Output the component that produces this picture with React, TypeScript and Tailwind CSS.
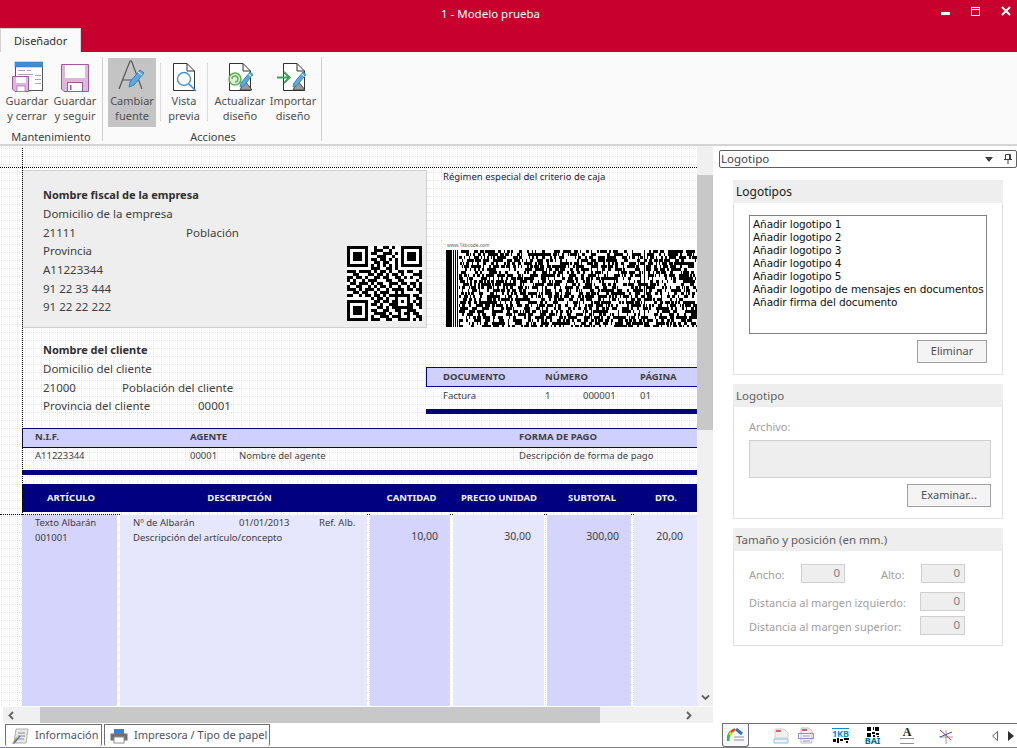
import type { ReactNode } from 'react'

const qrRows = [
  '1111111001001101001111111',
  '1000001001110010001000001',
  '1011101011001110101011101',
  '1011101000111001001011101',
  '1011101011011010101011101',
  '1000001001101100101000001',
  '1111111010101010101111111',
  '0000000011100110100000000',
  '1110111101011010011011001',
  '0011000110110101101000111',
  '1101101001101100110101001',
  '1010010111000110011000010',
  '0110111010110011101101101',
  '1001100101011010010010101',
  '1110101110100101111011011',
  '0011011001011100101000001',
  '1100101101101011111110110',
  '0000000010110100100010011',
  '1111111001101101101010101',
  '1000001011010011100011011',
  '1011101000110101111111001',
  '1011101011001100110011100',
  '1011101001111010010110110',
  '1000001010011101110010011',
  '1111111011100110011110101',
]

const QrCode = () => (
  <svg width={75} height={75} viewBox="0 0 25 25" shapeRendering="crispEdges">
    <rect width={25} height={25} fill="#fff" />
    {qrRows.map((row, y) =>
      row.split('').map((cell, x) => (cell === '1' ? <rect key={`${x}-${y}`} x={x} y={y} width={1} height={1} fill="#000" /> : null))
    )}
  </svg>
)

// pseudo random bars for the pdf417 block
const makeBars = () => {
  let seed = 7
  const next = () => {
    seed = (seed * 1103515245 + 12345) & 0x7fffffff
    return seed / 0x7fffffff
  }
  const bars: { x: number; y: number; w: number }[] = []
  for (let y = 0; y < 77; y += 3) {
    let x = 13
    while (x < 251) {
      const w = 1 + Math.floor(next() * 2.5)
      if (next() > 0.47) bars.push({ x, y, w })
      x += w
    }
  }
  return bars
}
const bars = makeBars()

const Barcode = () => (
  <svg width={251} height={77} shapeRendering="crispEdges">
    <rect width={251} height={77} fill="#fff" />
    <rect x={0} width={6} height={77} fill="#000" />
    <rect x={7} width={1} height={77} fill="#000" />
    <rect x={9} width={1} height={77} fill="#000" />
    <rect x={11} width={1} height={77} fill="#000" />
    {[47, 96, 145, 198].map((x) => (
      <rect key={x} x={x} width={1} height={77} fill="#000" />
    ))}
    {bars.map((b, i) => (
      <rect key={i} x={b.x} y={b.y} width={b.w} height={3} fill="#000" />
    ))}
  </svg>
)

const GridDots = () => (
  <svg className="absolute inset-0" width={697} height={560} shapeRendering="crispEdges">
    <defs>
      <pattern id="dots" x={1} y={2} width={8} height={8} patternUnits="userSpaceOnUse">
        <rect x={0} y={0} width={1} height={1} fill="#d8d8d8" />
        <rect x={2} y={0} width={1} height={1} fill="#e2e2e2" />
        <rect x={4} y={0} width={1} height={1} fill="#e2e2e2" />
        <rect x={6} y={0} width={1} height={1} fill="#e2e2e2" />
        <rect x={0} y={2} width={1} height={1} fill="#e2e2e2" />
        <rect x={0} y={4} width={1} height={1} fill="#e2e2e2" />
        <rect x={0} y={6} width={1} height={1} fill="#e2e2e2" />
      </pattern>
    </defs>
    <rect width={697} height={560} fill="url(#dots)" />
  </svg>
)

const Pencil = ({ x = 0, y = 0 }: { x?: number; y?: number }) => (
  <g transform={`translate(${x} ${y})`}>
    <path d="M2 14 L11 3 L14 5.5 L5 16.5 L1 18 Z" fill="#5fa8dc" stroke="#2f86c6" strokeWidth="1" />
    <path d="M9.5 5 L12.5 7.5" stroke="#fff" strokeWidth="1" />
  </g>
)

const DocOutline = () => (
  <path d="M5.5 2.5 H19 L26.5 10 V29.5 H5.5 Z M19 2.5 V10 H26.5" fill="#fff" stroke="#333" strokeWidth="1" />
)

const SaveCloseIcon = () => (
  <svg width={32} height={32} viewBox="0 0 32 32">
    <rect x="4.5" y="1.5" width="27" height="28" fill="#fff" stroke="#555" />
    <rect x="4" y="1" width="28" height="5" fill="#3f8fd0" stroke="#2a76b5" strokeWidth="0.5" />
    <path d="M7 9.5H14M16 9.5H20M24 14.5H30M24 18.5H30M24 22.5H30M7 13.5H22" stroke="#aaa" />
    <path d="M1.5 15.5H17.5V30.5H4L1.5 28Z" fill="#dcb8dc" stroke="#a3559f" />
    <rect x="5" y="16" width="10" height="6" fill="#fff" />
    <rect x="6" y="25" width="8" height="5.5" fill="#fff" stroke="#a3559f" strokeWidth="0.6" />
  </svg>
)

const SaveIcon = () => (
  <svg width={30} height={30} viewBox="0 0 30 30">
    <path d="M1.5 1.5H28.5V28.5H4L1.5 26Z" fill="#dcb8dc" stroke="#a3559f" />
    <rect x="5" y="2" width="20" height="13" fill="#fff" />
    <rect x="7.5" y="19.5" width="15" height="9" fill="#fff" stroke="#a3559f" />
    <rect x="10" y="22" width="1.5" height="5" fill="#a3559f" />
  </svg>
)

const FontIcon = () => (
  <svg width={34} height={34} viewBox="0 0 34 34">
    <path d="M4 30 L15 2 L16.5 2 L27 30 M8 21 H23" fill="none" stroke="#555" strokeWidth="1.2" />
    <g transform="translate(13 8)">
      <path d="M2 15 L12 3 L16 6 L6 18 L1 20 Z" fill="#5fa8dc" stroke="#2f86c6" />
      <path d="M10 5 L14 8" stroke="#fff" />
    </g>
  </svg>
)

const PreviewIcon = () => (
  <svg width={32} height={32} viewBox="0 0 32 32">
    <DocOutline />
    <circle cx="16" cy="18" r="6.5" fill="#fff" stroke="#3a97d4" strokeWidth="1.4" />
    <path d="M21 23 L28 30" stroke="#3a97d4" strokeWidth="1.6" />
  </svg>
)

const RefreshDocIcon = () => (
  <svg width={34} height={32} viewBox="0 0 34 32">
    <g transform="translate(1 0)">
      <DocOutline />
    </g>
    <circle cx="12" cy="18" r="6" fill="#dff0d8" stroke="#5db04f" strokeWidth="1.6" />
    <path d="M9 18 A3 3 0 1 1 12 21" fill="none" stroke="#5db04f" strokeWidth="1.4" />
    <path d="M17 29 L22 20 L29 29 Z" fill="#999" stroke="#333" strokeWidth="0.8" />
    <Pencil x={16} y={8} />
  </svg>
)

const ImportDocIcon = () => (
  <svg width={34} height={32} viewBox="0 0 34 32">
    <g transform="translate(2 0)">
      <DocOutline />
    </g>
    <path d="M1 16.5 H12 M8 11 L13.5 16.5 L8 22" fill="none" stroke="#3fa25a" strokeWidth="2.2" />
    <path d="M17 29 L22 20 L29 29 Z" fill="#999" stroke="#333" strokeWidth="0.8" />
    <Pencil x={16} y={8} />
  </svg>
)

const RibbonButton = ({ icon, top, bottom, active }: { icon: ReactNode; top: string; bottom: string; active?: boolean }) => (
  <div className={`flex h-[69px] flex-col items-center ${active ? 'bg-[#c4c4c4]' : ''}`}>
    <div className="flex h-[35px] items-end justify-center">{icon}</div>
    <span className="leading-[15px] whitespace-nowrap">{top}</span>
    <span className="leading-[15px] whitespace-nowrap">{bottom}</span>
  </div>
)

const Ribbon = () => (
  <div className="relative flex h-[94px] shrink-0 border-b-2 border-[#d4d4d4] bg-[#fafafa] text-[11px] text-[#505050]">
    <div className="flex w-[103px] flex-col border-r border-[#d0d0d0] mt-[5px] mb-[3px]">
      <div className="flex h-[69px] gap-[4px] pl-[5px] pt-[1px]">
        <div className="w-[44px]">
          <RibbonButton icon={<SaveCloseIcon />} top="Guardar" bottom="y cerrar" />
        </div>
        <div className="w-[44px]">
          <RibbonButton icon={<SaveIcon />} top="Guardar" bottom="y seguir" />
        </div>
      </div>
      <div className="mt-[3px] text-center leading-[15px] text-[#404040]">Mantenimiento</div>
    </div>
    <div className="flex w-[219px] flex-col border-r border-[#d0d0d0] mt-[5px] mb-[3px]">
      <div className="flex h-[69px] pt-[1px] pl-[5px]">
        <div className="w-[48px]">
          <RibbonButton icon={<FontIcon />} top="Cambiar" bottom="fuente" active />
        </div>
        <div className="my-[5px] ml-[4px] w-px bg-[#dcdcdc]" />
        <div className="w-[46px]">
          <RibbonButton icon={<PreviewIcon />} top="Vista" bottom="previa" />
        </div>
        <div className="my-[5px] w-px bg-[#dcdcdc]" />
        <div className="ml-[5px] w-[54px]">
          <RibbonButton icon={<RefreshDocIcon />} top="Actualizar" bottom="diseño" />
        </div>
        <div className="ml-[1px] w-[50px]">
          <RibbonButton icon={<ImportDocIcon />} top="Importar" bottom="diseño" />
        </div>
      </div>
      <div className="mt-[3px] pl-[2px] text-center leading-[15px] text-[#404040]">Acciones</div>
    </div>
  </div>
)

const ColumnHead = ({ width, label }: { width: string; label: string }) => (
  <div className={`${width} text-center whitespace-nowrap`}>{label}</div>
)

const ReportCanvas = () => (
  <div className="relative h-[560px] w-[697px] overflow-hidden bg-white text-[9.5px] leading-[14px] text-[#404040]">
    <GridDots />

    {/* company block */}
    <div className="absolute left-[22px] top-[24px] h-[158px] w-[405px] border border-[#d0d0d0] bg-[#eeeeee] text-[11.5px] leading-[18.7px]">
      <div className="pl-[20px] pt-[15px]">
        <div className="text-[11px] font-bold text-[#303030]">Nombre fiscal de la empresa</div>
        <div>Domicilio de la empresa</div>
        <div className="flex pt-px">
          <span className="w-[143px]">21111</span>
          <span>Población</span>
        </div>
        <div className="-mt-px">Provincia</div>
        <div>A11223344</div>
        <div>91 22 33 444</div>
        <div>91 22 22 222</div>
      </div>
      <div className="absolute left-[324px] top-[75px]">
        <QrCode />
      </div>
    </div>

    <div className="absolute left-[443px] top-[24px] text-[#202040]">Régimen especial del criterio de caja</div>

    <div className="absolute left-[446px] top-[94px] w-[251px] bg-white">
      <div className="h-[10px] pl-[1px] text-[4.8px] leading-[10px] text-[#606060]">www.1kbcode.com</div>
      <Barcode />
    </div>

    {/* client block */}
    <div className="absolute left-[43px] top-[195px] text-[11.5px] leading-[18.5px]">
      <div className="text-[11px] font-bold text-[#303030]">Nombre del cliente</div>
      <div>Domicilio del cliente</div>
      <div className="flex pt-px">
        <span className="w-[79px]">21000</span>
        <span>Población del cliente</span>
      </div>
      <div className="-mt-px flex">
        <span className="w-[155px]">Provincia del cliente</span>
        <span>00001</span>
      </div>
    </div>

    {/* document data */}
    <div className="absolute left-[426px] top-[221px] w-[271px]">
      <div className="flex h-[20px] items-center border-y border-l border-[#000080] bg-[#d0d0ff] pb-px pl-[16px] font-bold">
        <span className="w-[102px]">DOCUMENTO</span>
        <span className="w-[95px]">NÚMERO</span>
        <span>PÁGINA</span>
      </div>
      <div className="flex h-[19px] items-center pb-[2px] pl-[17px]">
        <span className="w-[102px]">Factura</span>
        <span className="w-[38px]">1</span>
        <span className="w-[57px]">000001</span>
        <span>01</span>
      </div>
      <div className="mt-[3px] h-[5px] bg-[#000080]" />
    </div>

    {/* tax and agent */}
    <div className="absolute left-[22px] top-[282px] w-[675px]">
      <div className="flex h-[20px] items-center border-y border-l border-[#000080] bg-[#d0d0ff] pb-[2px] pl-[12px] font-bold">
        <span className="w-[155px]">N.I.F.</span>
        <span className="w-[329px]">AGENTE</span>
        <span>FORMA DE PAGO</span>
      </div>
      <div className="flex h-[19px] items-center pb-[4px] pl-[13px]">
        <span className="w-[155px]">A11223344</span>
        <span className="w-[49px]">00001</span>
        <span className="w-[280px]">Nombre del agente</span>
        <span>Descripción de forma de pago</span>
      </div>
      <div className="mt-[3px] h-[5px] bg-[#000080]" />
    </div>

    {/* article table */}
    <div className="absolute left-[22px] top-[338px] w-[675px]">
      <div className="flex h-[28px] items-center bg-[#000080] font-bold text-[#f0f0ff]">
        <ColumnHead width="w-[98px]" label="ARTÍCULO" />
        <ColumnHead width="w-[239px]" label="DESCRIPCIÓN" />
        <ColumnHead width="w-[93px] pl-[12px]" label="CANTIDAD" />
        <ColumnHead width="w-[94px]" label="PRECIO UNIDAD" />
        <ColumnHead width="w-[92px]" label="SUBTOTAL" />
        <ColumnHead width="w-[56px]" label="DTO." />
      </div>
      <div className="mt-[3px] flex h-[191px] gap-[3px] leading-[15px]">
        <div className="w-[95px] bg-[#d4d4fc] pl-[13px]">
          <div>Texto Albarán</div>
          <div>001001</div>
        </div>
        <div className="w-[247px] bg-[#e6e6fc] pl-[13px]">
          <div className="flex">
            <span className="w-[106px]">Nº de Albarán</span>
            <span className="w-[80px]">01/01/2013</span>
            <span>Ref. Alb.</span>
          </div>
          <div>Descripción del artículo/concepto</div>
        </div>
        <div className="w-[80px] bg-[#d4d4fc] pr-[12px] pt-[14px] text-right text-[10.5px]">10,00</div>
        <div className="w-[91px] bg-[#e6e6fc] pr-[13px] pt-[14px] text-right text-[10.5px]">30,00</div>
        <div className="w-[84px] bg-[#d4d4fc] pr-[12px] pt-[14px] text-right text-[10.5px]">300,00</div>
        <div className="w-[63px] bg-[#e6e6fc] pr-[14px] pt-[14px] text-right text-[10.5px]">20,00</div>
      </div>
    </div>

    {/* margin guides */}
    <div className="absolute left-0 top-[21px] w-[697px] border-t border-dotted border-black" />
    <div className="absolute left-[22px] top-[2px] h-[367px] border-l border-dotted border-black" />
    <div className="absolute left-0 top-[368px] w-[120px] border-t border-dotted border-black" />
    <div className="absolute left-[367px] top-[368px] w-[3px] border-t border-dotted border-black" />
    <div className="absolute left-[450px] top-[368px] w-[3px] border-t border-dotted border-black" />
    <div className="absolute left-[544px] top-[368px] w-[3px] border-t border-dotted border-black" />
    <div className="absolute left-[631px] top-[368px] w-[3px] border-t border-dotted border-black" />
  </div>
)

const Chevron = ({ d }: { d: string }) => (
  <svg width={9} height={9} viewBox="0 0 9 9">
    <path d={d} fill="none" stroke="#606060" strokeWidth="1.8" />
  </svg>
)

const CanvasPane = () => (
  <div className="flex w-[714px] flex-col">
    <div className="flex h-[560px]">
      <ReportCanvas />
      <div className="flex w-[16px] flex-col bg-[#f0f0f0]">
        <div className="mt-[29px] h-[255px] bg-[#c8c8c8]" />
        <div className="flex flex-1 items-end justify-center pb-[4px]">
          <Chevron d="M1 2.5 L4.5 6 L8 2.5" />
        </div>
      </div>
    </div>
    <div className="ml-[3px] mt-px flex h-[16px] w-[710px] items-center bg-[#f0f0f0]">
      <div className="flex w-[37px] justify-center pr-[20px]">
        <Chevron d="M6 1 L2.5 4.5 L6 8" />
      </div>
      <div className="h-full w-[560px] bg-[#c8c8c8]" />
      <div className="ml-[84px]">
        <Chevron d="M3 1 L6.5 4.5 L3 8" />
      </div>
    </div>
  </div>
)

const PanelGroup = ({ title, muted, height, children }: { title: string; muted?: boolean; height: string; children: ReactNode }) => (
  <section className={`flex ${height} flex-col border border-t-0 border-[#e0e0e0]`}>
    <div className={`-mx-px h-[23px] shrink-0 bg-[#eeeeee] pl-[3px] leading-[23px] ${muted ? 'text-[11.5px] text-[#606060]' : 'text-[12px] text-[#202020]'}`}>
      {title}
    </div>
    {children}
  </section>
)

const FlatButton = ({ width, label }: { width: string; label: string }) => (
  <div className={`${width} flex h-[23px] items-center justify-center border border-[#a0a0a0] bg-[#f4f4f4] text-[11px] text-[#505050]`}>{label}</div>
)

const NumberField = ({ width }: { width: string }) => (
  <div className={`${width} h-[19px] border border-[#d0d0d0] bg-[#eeeeee] pr-[4px] text-right text-[11.5px] leading-[15px] text-[#808080]`}>0</div>
)

const listItems = [
  'Añadir logotipo 1',
  'Añadir logotipo 2',
  'Añadir logotipo 3',
  'Añadir logotipo 4',
  'Añadir logotipo 5',
  'Añadir logotipo de mensajes en documentos',
  'Añadir firma del documento',
]

const SidePanel = () => (
  <div className="flex w-[303px] flex-col bg-white pl-[5px] pt-[4px]">
    <div className="flex h-[18px] w-[298px] items-center justify-between rounded-[2px] border border-[#606060] pl-[1px] pr-[4px] text-[11.5px] text-[#404050]">
      <span>Logotipo</span>
      <div className="flex items-center gap-[11px]">
        <svg width={8} height={5} viewBox="0 0 8 5">
          <path d="M0 0H8L4 5Z" fill="#404040" />
        </svg>
        <svg width={8} height={10} viewBox="0 0 8 10">
          <path d="M1.5 0.5H6.5V5.5H1.5ZM0 5.5H8M4 5.5V10M5.5 0.5V5.5" fill="none" stroke="#404040" />
        </svg>
      </div>
    </div>

    <div className="ml-[14px] mt-[12px] flex w-[270px] flex-col gap-[9px]">
      <PanelGroup title="Logotipos" height="h-[195px]">
        <div className="ml-[15px] mt-[12px] h-[119px] w-[238px] border border-[#808080] pl-[3px] pt-[2px] font-['DejaVu_Sans',sans-serif] text-[10.5px] leading-[13px] text-[#101010]">
          {listItems.map((item) => (
            <div key={item} className="whitespace-nowrap tracking-[-0.1px]">
              {item}
            </div>
          ))}
        </div>
        <div className="ml-[183px] mt-[6px]">
          <FlatButton width="w-[70px]" label="Eliminar" />
        </div>
      </PanelGroup>

      <PanelGroup title="Logotipo" muted height="h-[135px]">
        <div className="ml-[15px] mt-[13px] text-[11px] leading-[14px] text-[#a0a0a0]">Archivo:</div>
        <div className="ml-[15px] mt-[6px] h-[38px] w-[242px] border border-[#d0d0d0] bg-[#eeeeee]" />
        <div className="ml-[173px] mt-[6px]">
          <FlatButton width="w-[84px]" label="Examinar..." />
        </div>
      </PanelGroup>

      <PanelGroup title="Tamaño y posición (en mm.)" muted height="h-[118px]">
        <div className="ml-[15px] mt-[13px] flex flex-col text-[11px] text-[#a0a0a0]">
          <div className="flex h-[19px] items-center">
            <span className="w-[52px] pt-[3px]">Ancho:</span>
            <NumberField width="w-[44px]" />
            <span className="ml-[36px] w-[40px] pt-[3px]">Alto:</span>
            <NumberField width="w-[44px]" />
          </div>
          <div className="mt-[9px] flex h-[19px] items-center">
            <span className="w-[171px] pt-[3px] whitespace-nowrap">Distancia al margen izquierdo:</span>
            <NumberField width="w-[45px]" />
          </div>
          <div className="mt-[5px] flex h-[19px] items-center">
            <span className="w-[171px] pt-[3px] whitespace-nowrap">Distancia al margen superior:</span>
            <NumberField width="w-[45px]" />
          </div>
        </div>
      </PanelGroup>
    </div>
  </div>
)

const DocTab = ({ width, icon, label }: { width: string; icon: ReactNode; label: string }) => (
  <div className={`${width} flex h-[22px] items-center gap-[6px] rounded-b-[2px] border border-b-0 border-[#707070] pl-[5px] text-[11px] text-[#505068]`}>
    {icon}
    <span className="whitespace-nowrap">{label}</span>
  </div>
)

const InfoIcon = () => (
  <svg width={18} height={18} viewBox="0 0 18 18">
    <path d="M5 2H17L15 16H3Z" fill="#e8e8e8" stroke="#b0b0b0" />
    <path d="M7 6H14M6.5 9H14M6 12H13" stroke="#909090" />
    <path d="M1 17L5 10L7 12L3 17Z" fill="#e8a020" />
    <path d="M3 16L9 9" stroke="#3a80c0" strokeWidth="1.5" />
  </svg>
)

const PrinterIcon = () => (
  <svg width={18} height={16} viewBox="0 0 18 16">
    <rect x="4" y="1" width="10" height="5" fill="#3a7fd0" />
    <rect x="0.5" y="5.5" width="17" height="7" fill="#707070" />
    <rect x="4" y="9" width="10" height="6" fill="#fff" stroke="#909090" />
  </svg>
)

const BottomIcons = () => (
  <div className="flex h-[24px] w-[295px] items-center border-t border-[#707070]">
    <div className="flex h-[23px] w-[27px] items-center justify-center rounded-b-[3px] border border-t-0 border-[#707070] bg-[#f8f8fc]">
      <svg width={17} height={14} viewBox="0 0 17 14">
        <path d="M1 13C1 7 3 4 6 3" fill="none" stroke="#30c040" strokeWidth="3" />
        <path d="M3 7C4 4 6 2 8 2" fill="none" stroke="#f0d020" strokeWidth="3" />
        <path d="M4 4L8 1" stroke="#e03030" strokeWidth="2" />
        <path d="M9 1L15 6" stroke="#3070c0" strokeWidth="3" />
        <path d="M7 9H17M7 12H17" stroke="#909090" />
      </svg>
    </div>
    <div className="ml-[24px] w-[16px]">
      <svg width={16} height={16} viewBox="0 0 16 16">
        <path d="M2 1H11L15 5V10H2Z" fill="#f0f0f0" stroke="#d0d0d0" />
        <path d="M3 3H8" stroke="#e03030" strokeWidth="1.5" />
        <path d="M1 11H15V15H1Z" fill="#eef4fa" stroke="#90c0e0" />
      </svg>
    </div>
    <div className="ml-[9px] w-[16px]">
      <svg width={16} height={17} viewBox="0 0 16 17">
        <path d="M3 1H11L14 4V16H3Z" fill="#f0f0f0" stroke="#c0c0c0" />
        <path d="M4 3H9" stroke="#c03040" strokeWidth="1.5" />
        <rect x="0.5" y="6.5" width="15" height="5" fill="none" stroke="#9090e8" />
        <path d="M5 9H12M5 14H12" stroke="#a0a0a0" />
      </svg>
    </div>
    <div className="ml-[18px] flex w-[17px] flex-col items-center">
      <div className="h-px w-[17px] bg-[#0090d0]" />
      <span className="text-[9px] leading-[9px] font-bold text-[#0090d0]">1KB</span>
      <svg width={16} height={5}>
        <path d="M0 1H3V4H0ZM4 0H6V5H4ZM7 1H10V3H7ZM11 0H16V2H11ZM13 3H15V5H13Z" fill="#000" />
      </svg>
    </div>
    <div className="ml-[16px] flex w-[15px] flex-col items-center">
      <svg width={12} height={10} viewBox="0 0 12 10" shapeRendering="crispEdges">
        <path d="M0 0H4V4H0ZM8 0H12V4H8ZM0 6H4V10H0ZM6 0H7V3H6ZM5 5H8V7H5ZM9 6H12V8H9ZM6 8H8V10H6ZM10 9H12V10H10Z" fill="#000" />
      </svg>
      <span className="text-[9px] leading-[8px] font-bold text-[#0060a8]">BAI</span>
    </div>
    <div className="ml-[20px] flex w-[14px] flex-col items-center">
      <span className="font-['Liberation_Serif',serif] text-[12px] leading-[10px] font-bold text-[#202020]">A</span>
      <div className="mt-[1px] h-[6px] w-[14px] border-y border-[#909090]" />
    </div>
    <div className="ml-[24px] w-[16px]">
      <svg width={16} height={16} viewBox="0 0 16 16">
        <path d="M1 9H15M8 2V16" stroke="#a0a0a0" />
        <path d="M2 2L13 12" stroke="#e02020" />
        <path d="M14 4L2 9" stroke="#3050d0" />
      </svg>
    </div>
    <div className="ml-[38px] flex items-center gap-[10px]">
      <svg width={6} height={10} viewBox="0 0 6 10">
        <path d="M5.5 0.5V9.5L0.5 5Z" fill="#fff" stroke="#606060" />
      </svg>
      <svg width={6} height={10} viewBox="0 0 6 10">
        <path d="M0 0V10L6 5Z" fill="#303030" />
      </svg>
    </div>
  </div>
)

export default function App() {
  return (
    <div className="flex h-[748px] w-[1017px] flex-col overflow-hidden bg-white font-['Noto_Sans','Open_Sans',sans-serif]">
      <header className="relative h-[52px] shrink-0 bg-[#c8002d]">
        <div className="pr-[36px] pt-[6px] text-center text-[11.5px] leading-[16px] text-white">1 - Modelo prueba</div>
        <div className="absolute right-[6px] top-[6px] flex items-center gap-[21px]">
          <div className="mt-[4px] h-[3px] w-[9px] bg-white" />
          <svg width={9} height={9} viewBox="0 0 9 9" shapeRendering="crispEdges">
            <path d="M0.5 0.5H8.5V8.5H0.5Z M0 2H9" fill="none" stroke="#fff" />
          </svg>
          <svg width={10} height={10} viewBox="0 0 10 10">
            <path d="M1 1L9 9M9 1L1 9" stroke="#fff" strokeWidth="2" />
          </svg>
        </div>
        <div className="absolute bottom-[-1px] left-0 h-[25px] w-[81px] border border-b-0 border-[#d4d4d4] bg-[#fafafa] pl-[13px] text-[11px] leading-[24px] text-[#303030]">
          Diseñador
        </div>
      </header>

      <Ribbon />

      <main className="flex h-[577px] shrink-0">
        <CanvasPane />
        <SidePanel />
      </main>

      <footer className="flex h-[25px] shrink-0 items-start justify-between border-b border-[#808080]">
        <div className="ml-[5px] flex gap-[2px] pt-px">
          <DocTab width="w-[97px]" icon={<InfoIcon />} label="Información" />
          <DocTab width="w-[166px]" icon={<PrinterIcon />} label="Impresora / Tipo de papel" />
        </div>
        <BottomIcons />
      </footer>
    </div>
  )
}
